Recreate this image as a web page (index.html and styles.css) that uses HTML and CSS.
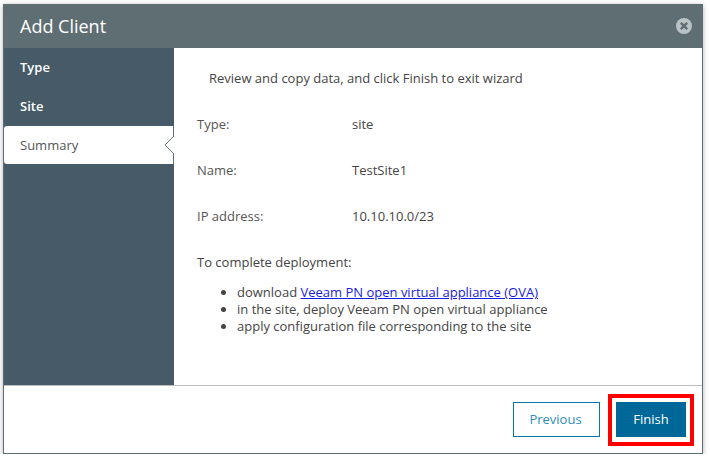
FILE: index.html
```html
<!DOCTYPE html>
<html lang="en">
<head>
<meta charset="utf-8">
<title>Add Client</title>
<link rel="stylesheet" href="styles.css">
</head>
<body>
<div class="dialog">
  <header class="head">
    <h1 class="title">Add Client</h1>
    <svg class="close" width="16" height="16" viewBox="0 0 16 16" aria-label="Close">
      <circle cx="8" cy="8" r="8" fill="#b9c2c5"/>
      <path d="M4.8 4.8l6.4 6.4M11.2 4.8l-6.4 6.4" stroke="#5f6e73" stroke-width="2.4" fill="none"/>
    </svg>
  </header>
  <div class="main">
    <nav class="side">
      <div class="step">Type</div>
      <div class="step">Site</div>
      <div class="step current">Summary
        <svg class="notch" width="10" height="20" viewBox="0 0 10 20">
          <path d="M10 1L1 10l9 9z" fill="#fff"/>
          <path d="M10 1L1 10l9 9" fill="none" stroke="#6d7b80"/>
        </svg>
      </div>
    </nav>
    <section class="content">
      <p class="intro">Review and copy data, and click Finish to exit wizard</p>
      <dl class="fields">
        <dt>Type:</dt><dd>site</dd>
        <dt>Name:</dt><dd>TestSite1</dd>
        <dt>IP address:</dt><dd>10.10.10.0/23</dd>
      </dl>
      <p class="note">To complete deployment:</p>
      <ul class="list">
        <li>download <a href="#">Veeam PN open virtual appliance (OVA)</a></li>
        <li>in the site, deploy Veeam PN open virtual appliance</li>
        <li>apply configuration file corresponding to the site</li>
      </ul>
    </section>
  </div>
  <footer class="foot">
    <button class="btn prev">Previous</button>
    <div class="mark"><button class="btn finish">Finish</button></div>
  </footer>
</div>
</body>
</html>
```
FILE: styles.css
```css
* { box-sizing: border-box; }
html, body { margin: 0; padding: 0; background: #fff; }
body { font-family: "Open Sans", sans-serif; font-size: 13px; color: #444; padding: 4px 0 0 3px; }
.dialog {
  width: 700px; height: 450px; display: flex; flex-direction: column;
  border: 1px solid #5f6e73; border-top: 0;
  box-shadow: 0 1px 5px rgba(0,0,0,.3);
  background: #fff;
}
.head {
  height: 44px; flex: none; margin: 0 -1px; background: #5f6e73;
  display: flex; align-items: center; justify-content: space-between; padding: 0 11px 0 17px;
}
.title { margin: 0; font-size: 18px; font-weight: 400; color: #fff; }
.main { height: 338px; flex: none; display: flex; border-bottom: 1px solid #bdbdbd; }
.side { width: 170px; flex: none; background: #465b67; }
.step { height: 39px; display: flex; align-items: center; padding: 0 0 1px 16px; color: #fff; font-weight: 600; }
.step.current {
  height: 38px; padding-bottom: 0; position: relative; background: #fff; color: #555; font-weight: 400;
  border-radius: 3px 0 0 3px; border-right: 1px solid #5f7078;
}
.notch { position: absolute; right: -1px; top: 9px; }
.content { flex: 1; padding: 21px 0 0 23px; }
.intro { margin: 0 0 28px 12px; line-height: 18px; }
.fields { display: grid; grid-template-columns: 155px 1fr; row-gap: 28px; margin: 0 0 28px; line-height: 18px; }
.fields dt, .fields dd { margin: 0; }
.fields dt { color: #555; }
.note { margin: 0 0 13px; line-height: 18px; }
.list { margin: 0; padding-left: 40px; line-height: 17px; }
.list a { color: #1a1ae0; }
.foot { flex: 1; display: flex; justify-content: flex-end; align-items: flex-start; gap: 8px; padding: 8px 8px 0 0; }
.btn { width: 87px; height: 35px; font: 13px "Open Sans", sans-serif; border-radius: 0; padding: 0 0 2px; }
.prev { background: #fff; color: #2f8cbb; border: 1px solid #0678a8; margin-top: 8px; padding-right: 2px; }
.mark { border: 4px solid #f00; padding: 4px 4px 5px; }
.finish { display: block; width: 70px; background: #006898; color: #fff; border: 0; }
```
